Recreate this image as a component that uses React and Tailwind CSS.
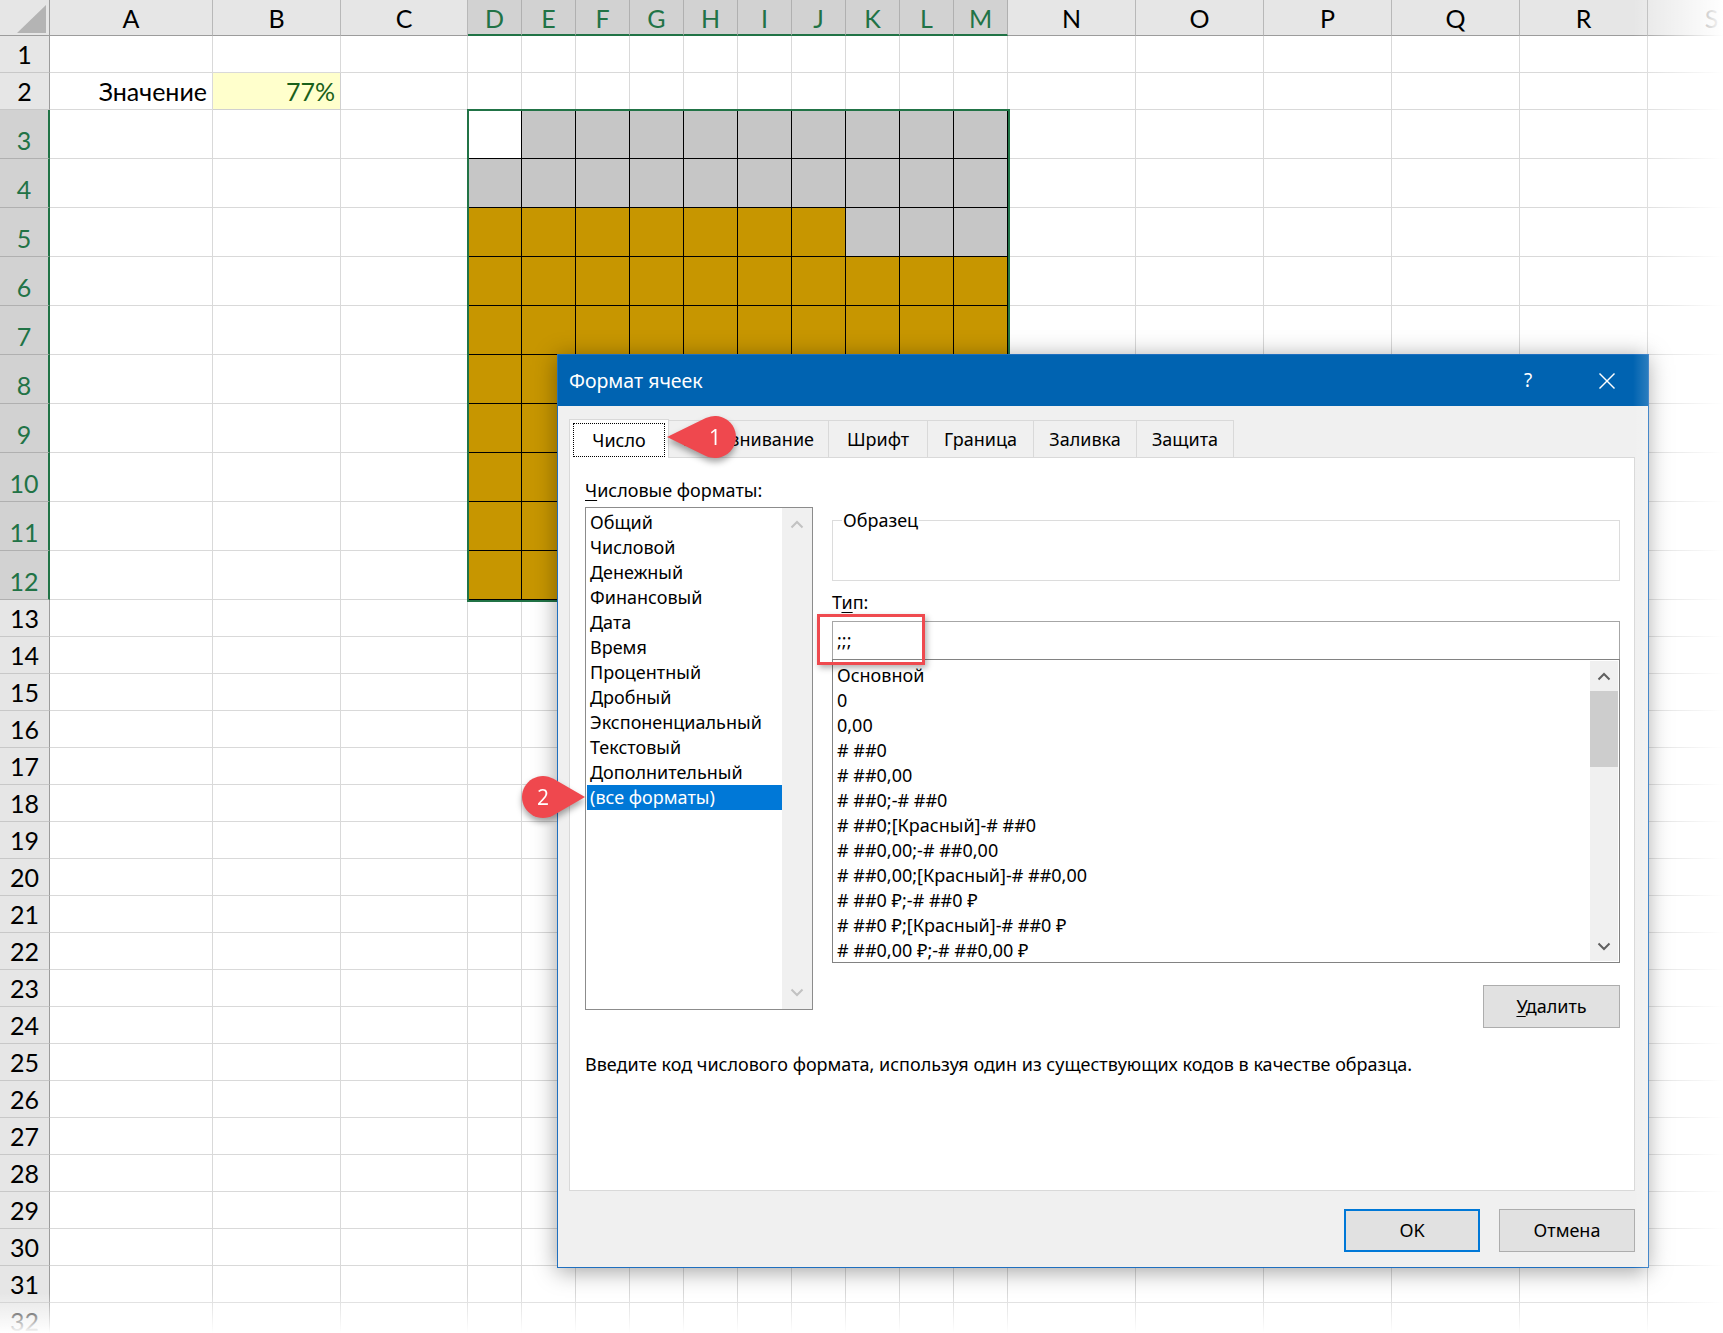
import React from 'react';

const COLS = [
  { k: 'A', w: 'w-[163px]' },
  { k: 'B', w: 'w-[128px]' },
  { k: 'C', w: 'w-[127px]' },
  { k: 'D', w: 'w-[54px]', s: true },
  { k: 'E', w: 'w-[54px]', s: true },
  { k: 'F', w: 'w-[54px]', s: true },
  { k: 'G', w: 'w-[54px]', s: true },
  { k: 'H', w: 'w-[54px]', s: true },
  { k: 'I', w: 'w-[54px]', s: true },
  { k: 'J', w: 'w-[54px]', s: true },
  { k: 'K', w: 'w-[54px]', s: true },
  { k: 'L', w: 'w-[54px]', s: true },
  { k: 'M', w: 'w-[54px]', s: true },
  { k: 'N', w: 'w-[128px]' },
  { k: 'O', w: 'w-[128px]' },
  { k: 'P', w: 'w-[128px]' },
  { k: 'Q', w: 'w-[128px]' },
  { k: 'R', w: 'w-[128px]' },
  { k: 'S', w: 'w-[128px]' },
];

const ROWS = Array.from({ length: 32 }, (_, i) => i + 1);

function cellFill(r, ci) {
  if (r === 3 && ci === 0) return 'bg-white';
  const idx = (12 - r) * 10 + ci;
  return idx < 77 ? 'bg-[#c79600]' : 'bg-[#c6c6c6]';
}

function Sheet() {
  return (
    <div className="flex flex-col [font-family:Lato,'Liberation_Sans',sans-serif] text-[25px] text-black">
      <div className="flex h-[36px] shrink-0">
        <div className="relative w-[50px] shrink-0 bg-[#e6e6e6] border-r border-b border-[#9c9c9c]">
          <svg className="absolute left-[17px] top-[5px]" width="30" height="29" viewBox="0 0 30 29">
            <polygon points="29,0 29,28 0,28" fill="#b4b4b4" />
          </svg>
        </div>
        {COLS.map((c) => (
          <div
            key={c.k}
            className={`${c.w} shrink-0 flex items-end justify-center leading-none border-r ${
              c.s
                ? 'bg-[#d2d2d2] text-[#217346] border-r-[#b0b0b0] border-b-2 border-b-[#217346] pb-[3px]'
                : 'bg-[#e6e6e6] border-r-[#b8b8b8] border-b border-b-[#9c9c9c] pb-[4px]'
            }`}
          >
            {c.k}
          </div>
        ))}
      </div>
      {ROWS.map((r) => {
        const sel = r >= 3 && r <= 12;
        return (
          <div key={r} className={`flex shrink-0 ${sel ? 'h-[49px]' : 'h-[37px]'}`}>
            <div
              className={`w-[50px] shrink-0 flex items-end justify-center leading-none pb-[5px] border-b ${
                sel
                  ? 'bg-[#d2d2d2] text-[#217346] border-r-2 border-r-[#217346] border-b-[#b0b0b0]'
                  : 'bg-[#e6e6e6] border-r border-r-[#9c9c9c] border-b-[#c8c8c8]'
              }`}
            >
              {r}
            </div>
            {COLS.map((c, i) => {
              if (sel && c.s) {
                return (
                  <div
                    key={c.k}
                    className={`${c.w} shrink-0 border-r border-b border-black ${cellFill(r, i - 3)}`}
                  />
                );
              }
              if (r === 2 && c.k === 'A') {
                return (
                  <div key={c.k} className={`${c.w} shrink-0 border-r border-b border-[#d9d9d9] flex items-end justify-end pr-[5px] pb-[5px] leading-none`}>
                    Значение
                  </div>
                );
              }
              if (r === 2 && c.k === 'B') {
                return (
                  <div key={c.k} className={`${c.w} shrink-0 border-r border-b border-[#d0d0d0] bg-[#ffffcc] flex items-end justify-end pr-[5px] pb-[5px] leading-none text-[#19601a]`}>
                    77%
                  </div>
                );
              }
              return <div key={c.k} className={`${c.w} shrink-0 border-r border-b border-[#d9d9d9]`} />;
            })}
          </div>
        );
      })}
    </div>
  );
}

function Chevron({ up, color }) {
  return (
    <svg width="14" height="9" viewBox="0 0 14 9">
      {up ? (
        <polyline points="1.5,7.5 7,2 12.5,7.5" fill="none" stroke={color} strokeWidth="2" />
      ) : (
        <polyline points="1.5,1.5 7,7 12.5,1.5" fill="none" stroke={color} strokeWidth="2" />
      )}
    </svg>
  );
}

const FORMATS = [
  'Общий',
  'Числовой',
  'Денежный',
  'Финансовый',
  'Дата',
  'Время',
  'Процентный',
  'Дробный',
  'Экспоненциальный',
  'Текстовый',
  'Дополнительный',
  '(все форматы)',
];

const TYPES = [
  'Основной',
  '0',
  '0,00',
  '# ##0',
  '# ##0,00',
  '# ##0;-# ##0',
  '# ##0;[Красный]-# ##0',
  '# ##0,00;-# ##0,00',
  '# ##0,00;[Красный]-# ##0,00',
  '# ##0 ₽;-# ##0 ₽',
  '# ##0 ₽;[Красный]-# ##0 ₽',
  '# ##0,00 ₽;-# ##0,00 ₽',
];

const TABS = [
  { t: 'Выравнивание', w: 'w-[160px]' },
  { t: 'Шрифт', w: 'w-[99px]' },
  { t: 'Граница', w: 'w-[106px]' },
  { t: 'Заливка', w: 'w-[103px]' },
  { t: 'Защита', w: 'w-[97px]' },
];

function Dialog() {
  return (
    <div className="absolute isolate left-[557px] top-[354px] w-[1092px] h-[914px] bg-[#f0f0f0] border border-[#1f6fbf] shadow-[0_3px_22px_rgba(0,0,0,0.38)] flex flex-col [font-family:'Noto_Sans',sans-serif] text-[18px] text-black">
      <div className="h-[51px] shrink-0 bg-[#0063b1] flex items-center pl-[11px] text-white">
        <span className="flex-1 text-[19.5px]">Формат ячеек</span>
        <span className="w-[20px] text-center text-[19px]">?</span>
        <span className="w-[61px]" />
        <svg width="16" height="16" viewBox="0 0 16 16" className="mr-[33px]">
          <line x1="0.5" y1="0.5" x2="15.5" y2="15.5" stroke="white" strokeWidth="1.4" />
          <line x1="15.5" y1="0.5" x2="0.5" y2="15.5" stroke="white" strokeWidth="1.4" />
        </svg>
      </div>
      <div className="flex-1 flex flex-col pl-[11px] pr-[13px] pt-[13px]">
        <div className="relative z-10 -mb-px flex items-end h-[39px]">
          <div className="w-[100px] h-[39px] bg-white border border-b-0 border-[#d9d9d9] p-[3px] pb-[1px]">
            <div className="w-full h-full border border-dotted border-black flex items-center justify-center">Число</div>
          </div>
          {TABS.map((t) => (
            <div
              key={t.t}
              className={`${t.w} h-[37px] mb-px bg-[#f0f0f0] border border-l-0 border-b-0 border-[#d9d9d9] flex items-center justify-center`}
            >
              {t.t}
            </div>
          ))}
        </div>
        <div className="h-[734px] shrink-0 bg-white border border-[#d9d9d9] flex flex-col pl-[15px] pr-[14px] pt-[20px]">
          <div className="flex gap-[19px]">
            <div className="w-[228px] shrink-0 flex flex-col">
              <div className="leading-[25px] whitespace-nowrap">
                <span className="underline underline-offset-[3px]">Ч</span>исловые форматы:
              </div>
              <div className="mt-[4px] h-[503px] border border-[#8c8c8c] flex">
                <div className="flex-1 pl-px pt-[2px] leading-[25px]">
                  {FORMATS.map((f, i) => (
                    <div
                      key={f}
                      className={`pl-[3px] whitespace-nowrap ${i === 11 ? 'bg-[#0078d7] text-white' : ''}`}
                    >
                      {f}
                    </div>
                  ))}
                </div>
                <div className="w-[30px] shrink-0 bg-[#f0f0f0] flex flex-col items-center justify-between py-[12px]">
                  <Chevron up color="#c2c2c2" />
                  <Chevron color="#c2c2c2" />
                </div>
              </div>
            </div>
            <div className="flex-1 flex flex-col">
              <div className="mt-[42px] h-[61px] border border-[#dcdcdc]">
                <div className="ml-[9px] -mt-[13px] w-fit bg-white px-[1px] leading-[25px]">Образец</div>
              </div>
              <div className="mt-[9px] leading-[25px]">
                Т<span className="underline underline-offset-[3px]">и</span>п:
              </div>
              <div className="mt-[6px] h-[38px] border border-b-0 border-[#a6a6a6] flex items-center pl-[4px]">;;;</div>
              <div className="h-[304px] border border-[#828282] flex">
                <div className="flex-1 overflow-hidden pt-[3px] pl-[4px] leading-[25px]">
                  {TYPES.map((t) => (
                    <div key={t} className="whitespace-nowrap">{t}</div>
                  ))}
                </div>
                <div className="w-[28px] shrink-0 my-px mr-px bg-[#f0f0f0] flex flex-col">
                  <div className="h-[30px] flex items-center justify-center">
                    <Chevron up color="#606060" />
                  </div>
                  <div className="h-[76px] bg-[#cdcdcd]" />
                  <div className="flex-1" />
                  <div className="h-[30px] flex items-center justify-center">
                    <Chevron color="#606060" />
                  </div>
                </div>
              </div>
              <div className="mt-[22px] self-end w-[137px] h-[43px] bg-[#e1e1e1] border border-[#adadad] flex items-center justify-center">
                <span>
                  <span className="underline underline-offset-[3px]">У</span>далить
                </span>
              </div>
            </div>
          </div>
          <div className="mt-[24px] leading-[25px] whitespace-nowrap">
            Введите код числового формата, используя один из существующих кодов в качестве образца.
          </div>
        </div>
        <div className="mt-[18px] flex justify-end gap-[19px]">
          <div className="w-[136px] h-[43px] bg-[#e1e1e1] border-2 border-[#0078d7] flex items-center justify-center">OK</div>
          <div className="w-[136px] h-[43px] bg-[#e1e1e1] border border-[#adadad] flex items-center justify-center">Отмена</div>
        </div>
      </div>
      <div className="absolute z-20 left-[259px] top-[259px] w-[108px] h-[51px] border-[3px] border-[#ef4a4f] shadow-[2px_3px_6px_rgba(0,0,0,0.3)]" />
    </div>
  );
}

function Callouts() {
  return (
    <>
      <svg
        className="absolute z-30 left-[662px] top-[411px] drop-shadow-[0_4px_3px_rgba(0,0,0,0.35)]"
        width="80"
        height="55"
        viewBox="0 0 80 55"
      >
        <path d="M5 26 L43.8 7.1 A21 21 0 1 1 43.8 44.9 Z" fill="#ef484e" />
        <text x="53" y="33.5" textAnchor="middle" fill="white" fontSize="21" fontFamily="'Open Sans', sans-serif">1</text>
      </svg>
      <svg
        className="absolute z-30 left-[515px] top-[771px] drop-shadow-[0_4px_3px_rgba(0,0,0,0.35)]"
        width="80"
        height="55"
        viewBox="0 0 80 55"
      >
        <path d="M70 26 L38.5 44.19 A21 21 0 1 1 38.5 7.81 Z" fill="#ef484e" />
        <text x="28" y="33.5" textAnchor="middle" fill="white" fontSize="21" fontFamily="'Open Sans', sans-serif">2</text>
      </svg>
    </>
  );
}

export default function App() {
  return (
    <div className="relative w-[1723px] h-[1333px] overflow-hidden bg-white">
      <Sheet />
      <div className="absolute left-[467px] top-[109px] w-[543px] h-[493px] border-2 border-[#217346]" />
      <Dialog />
      <Callouts />
      <div className="absolute z-40 right-0 top-0 h-full w-[90px] bg-linear-to-r from-white/0 to-white" />
      <div className="absolute z-40 left-0 bottom-0 w-full h-[40px] bg-linear-to-b from-white/0 to-white" />
    </div>
  );
}
